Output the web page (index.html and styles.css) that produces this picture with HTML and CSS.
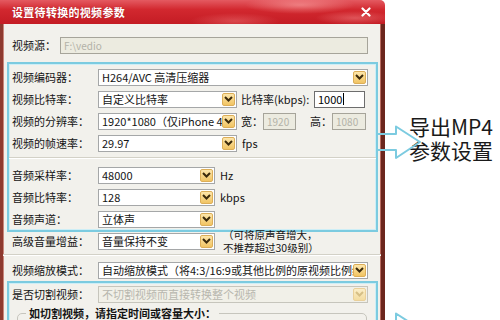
FILE: index.html
```html
<!DOCTYPE html>
<html>
<head>
<meta charset="utf-8">
<link rel="stylesheet" href="styles.css">
</head>
<body>
<div class="page">
  <div class="dialog">
    <div class="titlebar">
      <span class="title">设置待转换的视频参数</span>
      <svg class="close" width="10" height="10" viewBox="0 0 10 10"><path d="M1.5 1.5 L8.5 8.5 M8.5 1.5 L1.5 8.5" stroke="#fff" stroke-width="2.2" stroke-linecap="round"/></svg>
    </div>
    <div class="body">
      <div class="row src">
        <span class="lbl short">视频源：</span>
        <div class="field disabled wsrc">F:\vedio</div>
      </div>

      <div class="group g1">
        <div class="row">
          <span class="lbl">视频编码器：</span>
          <div class="sel w270"><span class="val">H264/AVC 高清压缩器</span><span class="dd"><svg width="9" height="6" viewBox="0 0 9 6"><path d="M1 1 L4.5 4.5 L8 1" stroke="#3b2a0c" stroke-width="2" fill="none"/></svg></span></div>
        </div>
        <div class="row">
          <span class="lbl">视频比特率：</span>
          <div class="sel w139"><span class="val">自定义比特率</span><span class="dd"><svg width="9" height="6" viewBox="0 0 9 6"><path d="M1 1 L4.5 4.5 L8 1" stroke="#3b2a0c" stroke-width="2" fill="none"/></svg></span></div>
          <span class="kbps">比特率(kbps):</span>
          <div class="field active w51">1000<span class="caret"></span></div>
        </div>
        <div class="row">
          <span class="lbl">视频的分辨率：</span>
          <div class="sel w139"><span class="val">1920*1080（仅iPhone 4/3(</span><span class="dd"><svg width="9" height="6" viewBox="0 0 9 6"><path d="M1 1 L4.5 4.5 L8 1" stroke="#3b2a0c" stroke-width="2" fill="none"/></svg></span></div>
          <span class="dim">宽：</span>
          <div class="field disabled w33">1920</div>
          <span class="dim gap">高：</span>
          <div class="field disabled w34">1080</div>
        </div>
        <div class="row">
          <span class="lbl">视频的帧速率：</span>
          <div class="sel w139"><span class="val">29.97</span><span class="dd"><svg width="9" height="6" viewBox="0 0 9 6"><path d="M1 1 L4.5 4.5 L8 1" stroke="#3b2a0c" stroke-width="2" fill="none"/></svg></span></div>
          <span class="unit">fps</span>
        </div>
        <div class="sep"></div>
        <div class="row">
          <span class="lbl">音频采样率：</span>
          <div class="sel w117"><span class="val">48000</span><span class="dd"><svg width="9" height="6" viewBox="0 0 9 6"><path d="M1 1 L4.5 4.5 L8 1" stroke="#3b2a0c" stroke-width="2" fill="none"/></svg></span></div>
          <span class="unit">Hz</span>
        </div>
        <div class="row">
          <span class="lbl">音频比特率：</span>
          <div class="sel w117"><span class="val">128</span><span class="dd"><svg width="9" height="6" viewBox="0 0 9 6"><path d="M1 1 L4.5 4.5 L8 1" stroke="#3b2a0c" stroke-width="2" fill="none"/></svg></span></div>
          <span class="unit">kbps</span>
        </div>
        <div class="row">
          <span class="lbl">音频声道：</span>
          <div class="sel w117"><span class="val">立体声</span><span class="dd"><svg width="9" height="6" viewBox="0 0 9 6"><path d="M1 1 L4.5 4.5 L8 1" stroke="#3b2a0c" stroke-width="2" fill="none"/></svg></span></div>
        </div>
      </div>

      <div class="row outer gain">
        <span class="lbl">高级音量增益：</span>
        <div class="sel w117"><span class="val">音量保持不变</span><span class="dd"><svg width="9" height="6" viewBox="0 0 9 6"><path d="M1 1 L4.5 4.5 L8 1" stroke="#3b2a0c" stroke-width="2" fill="none"/></svg></span></div>
        <div class="note"><div>（可将原声音增大，</div><div>不推荐超过30级别）</div></div>
      </div>
      <div class="sep outer-sep"></div>
      <div class="row outer">
        <span class="lbl">视频缩放模式：</span>
        <div class="sel w270"><span class="val">自动缩放模式（将4:3/16:9或其他比例的原视频比例缩放</span><span class="dd"><svg width="9" height="6" viewBox="0 0 9 6"><path d="M1 1 L4.5 4.5 L8 1" stroke="#3b2a0c" stroke-width="2" fill="none"/></svg></span></div>
      </div>

      <div class="group g2">
        <div class="row">
          <span class="lbl">是否切割视频：</span>
          <div class="sel w270 off"><span class="val">不切割视频而直接转换整个视频</span><span class="dd"><svg width="9" height="6" viewBox="0 0 9 6"><path d="M1 1 L4.5 4.5 L8 1" stroke="#d6bf86" stroke-width="2" fill="none"/></svg></span></div>
        </div>
        <fieldset class="cut">
          <legend>如切割视频，请指定时间或容量大小：</legend>
        </fieldset>
      </div>
    </div>
  </div>
  <div class="side"><div>导出MP4</div><div>参数设置</div></div>
  <svg class="arrow a1" width="50" height="40" viewBox="0 0 50 40"><path d="M1 9 H20 V1.5 L44 17 L20 33 V25 H1" fill="none" stroke="#7ccbe0" stroke-width="2" stroke-linejoin="round"/></svg>
  <svg class="arrow a2" width="50" height="40" viewBox="0 0 50 40"><path d="M1 9 H20 V1.5 L44 17 L20 33 V25 H1" fill="none" stroke="#7ccbe0" stroke-width="2" stroke-linejoin="round"/></svg>
</div>
</body>
</html>
```

FILE: styles.css
```css
* { box-sizing: border-box; margin: 0; padding: 0; }
html, body { width: 500px; height: 320px; overflow: hidden; background: #fff; }
body {
  font-family: "Noto Sans CJK SC", "Noto Sans", sans-serif;
  font-size: 11px;
  color: #141414;
  line-height: 15px;
}
.page { position: relative; display: flex; width: 500px; height: 320px; }
.dialog { width: 385px; height: 320px; flex: none; display: flex; flex-direction: column; }
.titlebar {
  height: 24px; flex: none;
  display: flex; align-items: center; justify-content: space-between;
  padding: 0 14px 0 12px;
  border-radius: 0 5px 0 0;
  color: #fff; font-weight: bold; font-size: 11px;
  background:
    radial-gradient(ellipse 55px 9px at 300px 5px, rgba(255,175,175,.55), transparent),
    radial-gradient(ellipse 40px 7px at 355px 18px, rgba(255,160,160,.4), transparent),
    radial-gradient(ellipse 45px 8px at 235px 21px, rgba(255,150,150,.35), transparent),
    linear-gradient(#e45a61 0%, #d2282f 40%, #c41c24 100%);
}
.title { letter-spacing: 0.3px; text-shadow: 0 0 1px rgba(120,0,0,.5); }
.close { display: block; margin-top: -1px; }
.body {
  flex: 1;
  background: #f2f1ec;
  border-left: 3px solid #8e3a2f;
  border-right: 4px solid #6c261d;
  box-shadow: inset 1px 0 0 #c9877c, inset -1px 0 0 #b86a5e;
  padding-top: 13px;
}
.row { display: flex; align-items: center; height: 22px; }
.row.src { height: 17px; padding-left: 9px; }
.row.outer { padding-left: 9px; height: 20px; }
.row.gain { height: 18px; }
.lbl { width: 86px; flex: none; white-space: nowrap; }
.lbl.short { width: 48px; }

.field {
  height: 17px; border: 1px solid #a6a49a; background: #fff;
  display: flex; align-items: center; padding-left: 3px;
  white-space: nowrap; overflow: hidden; font-size: 10px;
}
.field.disabled { background: #ecebe0; color: #b3b2a8; }
.field.active { border-color: #6d6d6d; color: #000; font-size: 11px; }
.caret { width: 1px; height: 12px; background: #000; margin-left: 1px; }
.wsrc { width: 308px; }
.w51 { width: 51px; }
.w33 { width: 33px; }
.w34 { width: 34px; }

.sel {
  height: 17px; border: 1px solid #a5a7a8; background: #fff;
  display: flex; align-items: center; padding-left: 3px; padding-right: 1px;
  flex: none; overflow: hidden;
}
.sel .val { flex: 1; min-width: 0; white-space: nowrap; overflow: hidden; line-height: 15px; }
.sel .dd {
  flex: none; width: 13px; height: 13px;
  display: flex; align-items: center; justify-content: center;
  background: linear-gradient(#fde6ab, #f1c463);
  border: 1px solid #dcae58; border-radius: 2px;
}
.sel.off { background: #f1f0e8; color: #b8b7ae; border-color: #c6c5bc; }
.sel.off .dd { background: linear-gradient(#fbeec8, #f3dca0); border-color: #ead09a; }
.w270 { width: 270px; }
.w139 { width: 139px; }
.w117 { width: 117px; }

.kbps { width: 77px; flex: none; padding-left: 4px; white-space: nowrap; }
.dim { width: 26px; flex: none; padding-left: 4px; }
.dim.gap { margin-left: 10px; }
.unit { margin-left: 5px; }
.note { margin-left: 8px; line-height: 13px; font-size: 10.5px; white-space: nowrap; }

.group {
  width: 371px; margin-left: 4px;
  border: 2px solid #7ccbe0;
  box-shadow: inset 0 0 0 1px #cdeef6;
  padding: 2px 0 0 3px;
}
.g1 { margin-top: 8px; }
.sep {
  height: 2px; margin: 3px 0 5px -3px;
  border-top: 1px solid #d3d1c7; border-bottom: 1px solid #fff;
}
.outer-sep { margin: 4px 0 4px 0; }
.g2 { margin-top: 1px; padding-top: 0; height: 60px; border-bottom: none; }
.cut {
  margin: 0 0 0 5px; width: 350px; height: 40px;
  border: 1px solid #c6c5bd; border-radius: 5px;
  padding: 0;
}
.cut legend {
  margin-left: 8px; padding: 0 3px;
  font-weight: bold; font-size: 11px; line-height: 16px;
}

.side {
  padding: 114px 0 0 24px;
  font-size: 21px; line-height: 24px; color: #1a1a1a;
  white-space: nowrap;
}
.arrow { position: absolute; }
.a1 { left: 376px; top: 125px; }
.a2 { left: 376px; top: 312px; }
```
